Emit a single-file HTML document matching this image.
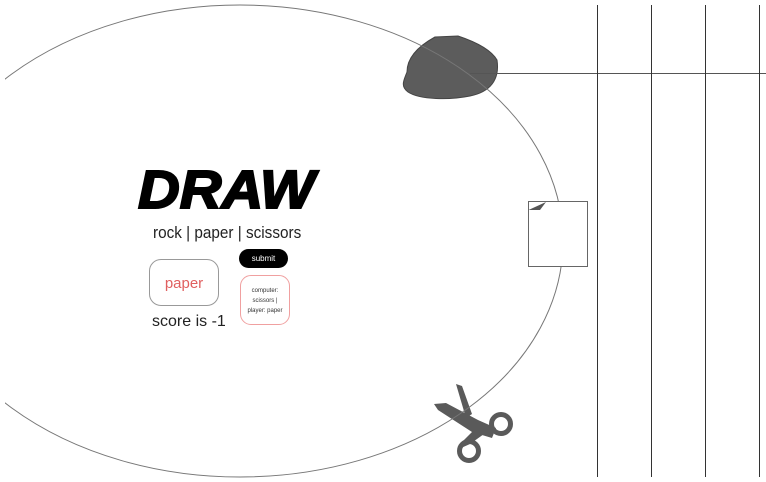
<!DOCTYPE html>
<html><head><meta charset="utf-8"><style>
body{margin:0;width:766px;height:482px;background:#fff;overflow:hidden;position:relative;font-family:"Liberation Sans",sans-serif}
.a{position:absolute}
</style></head><body>
<svg class="a" style="left:0;top:0" width="766" height="482">
<defs><clipPath id="c"><rect x="5" y="0" width="761" height="482"/></clipPath></defs>
<path d="M435,37 L458,36 C470,40 490,48 497,60 C500,80 490,92 470,96 C450,100 420,100 408,92 C400,86 404,80 407,72 C407,60 415,48 435,37 Z" fill="#5c5c5c" stroke="#444" stroke-width="1"/>
<line x1="470" y1="73.5" x2="766" y2="73.5" stroke="#555" stroke-width="1"/>
<g fill="#5a5a5a">
<path d="M456,384 L462,386 L472,414 L466,418 Z"/>
<path d="M434,404 L446,403 L478,420 L496,428 L492,438 L472,432 L438,410 Z"/>
<path d="M474,430 L462,442 L461,448 L470,444 L484,434 Z"/>
</g>
<circle cx="501" cy="424" r="9.5" fill="none" stroke="#5a5a5a" stroke-width="5"/>
<circle cx="469" cy="451" r="9.5" fill="none" stroke="#5a5a5a" stroke-width="5"/>
<ellipse cx="240" cy="241" rx="323" ry="236" fill="none" stroke="#777" stroke-width="1" clip-path="url(#c)"/>
<g stroke="#333" stroke-width="1">
<line x1="597.5" y1="5" x2="597.5" y2="477"/>
<line x1="651.5" y1="5" x2="651.5" y2="477"/>
<line x1="705.5" y1="5" x2="705.5" y2="477"/>
<line x1="759.5" y1="5" x2="759.5" y2="477"/>
</g>
<rect x="528.5" y="201.5" width="59" height="65" fill="#fff" stroke="#666"/>
<path d="M528.5,210 L546,202 L540,210 Z" fill="#555"/>
</svg>
<div class="a" style="left:138px;top:160px;font-size:54px;font-weight:900;font-style:italic;line-height:60px;-webkit-text-stroke:2px #000;transform:scaleX(1.07);transform-origin:left">DRAW</div>
<div class="a" style="left:153px;top:223px;font-size:17px;color:#222;transform:scaleX(0.9);transform-origin:left">rock | paper | scissors</div>
<div class="a" style="left:149px;top:259px;width:70px;height:47px;border:1.5px solid #999;border-radius:12px;box-sizing:border-box;color:#e06060;font-size:15px;text-align:center;line-height:47px">paper</div>
<div class="a" style="left:239px;top:249px;width:49px;height:19px;background:#000;border-radius:10px;color:#fff;font-size:8px;text-align:center;line-height:19px">submit</div>
<div class="a" style="left:240px;top:275px;width:50px;height:50px;border:1px solid #f0a0a0;border-radius:11px;box-sizing:border-box;font-size:6px;color:#333;text-align:center;line-height:10px;padding-top:10px">computer:<br>scissors |<br>player: paper</div>
<div class="a" style="left:152px;top:313px;font-size:16px;color:#222">score is -1</div>
</body></html>
